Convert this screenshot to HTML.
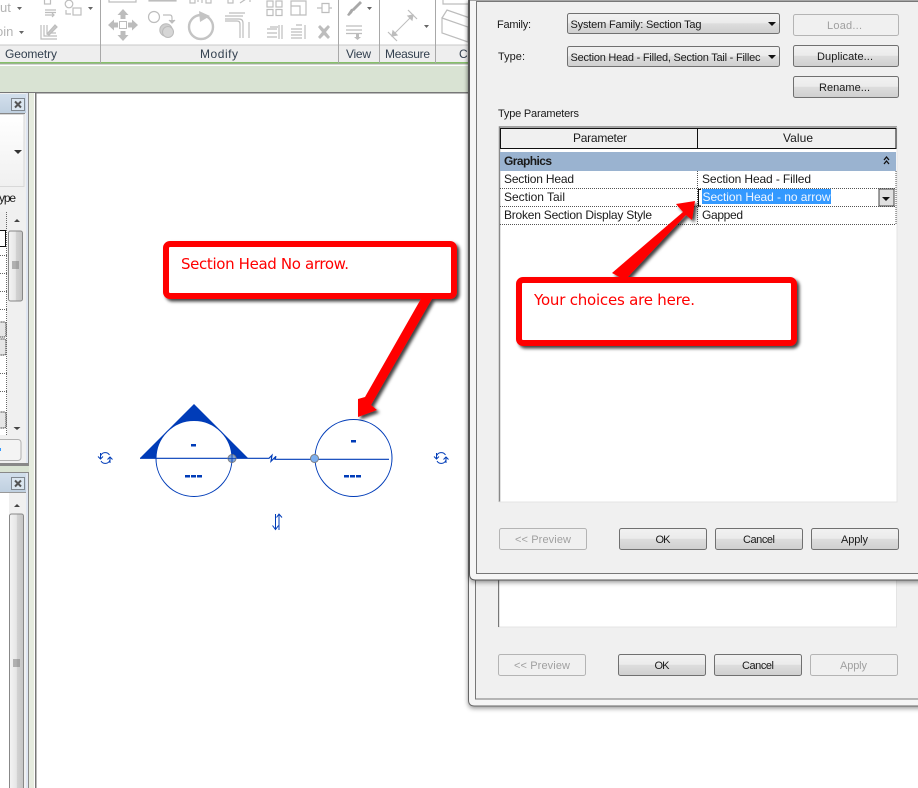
<!DOCTYPE html>
<html><head><meta charset="utf-8"><style>
html,body{margin:0;padding:0;background:#fff;overflow:hidden}
svg{display:block;position:absolute;left:0;top:0}
text{font-family:"Liberation Sans",sans-serif;font-size:12px;fill:#1a1a1a}
.s{font-size:11px}
.d{fill:#a0a0a0;font-size:11px}
.c{font-family:"DejaVu Sans",sans-serif;font-size:15px;fill:#f00}
.l{font-size:12px;fill:#33404f}
.g{fill:#b4b4b4;font-size:13px}
</style></head><body>
<svg width="918" height="788" viewBox="0 0 918 788" xmlns="http://www.w3.org/2000/svg">
<defs>
<linearGradient id="b" x1="0" y1="0" x2="0" y2="1"><stop offset="0" stop-color="#f2f2f2"/><stop offset=".48" stop-color="#ebebeb"/><stop offset=".5" stop-color="#dddddd"/><stop offset="1" stop-color="#cfcfcf"/></linearGradient>
<linearGradient id="h" x1="0" y1="0" x2="0" y2="1"><stop offset="0" stop-color="#d2dfec"/><stop offset="1" stop-color="#c0d0e0"/></linearGradient>
<linearGradient id="sb" x1="0" y1="0" x2="1" y2="0"><stop offset="0" stop-color="#f4f4f4"/><stop offset=".5" stop-color="#e6e6e6"/><stop offset=".55" stop-color="#d2d2d2"/><stop offset="1" stop-color="#c4c4c4"/></linearGradient>
<linearGradient id="pg" x1="0" y1="0" x2="0" y2="1"><stop offset="0" stop-color="#fff"/><stop offset="1" stop-color="#f0f0f0"/></linearGradient>
<filter id="sh" x="-10%" y="-10%" width="125%" height="125%"><feDropShadow dx="2.5" dy="2.5" stdDeviation="1.6" flood-color="#000" flood-opacity=".75"/></filter>
<filter id="ds" x="-5%" y="-5%" width="110%" height="110%"><feDropShadow dx="0" dy="2" stdDeviation="2.5" flood-color="#000" flood-opacity=".4"/></filter>
</defs>

<!-- ribbon -->
<rect width="918" height="788" fill="#fff"/>
<rect x="0" y="45" width="470" height="17" fill="#eeeeee"/>
<rect x="0" y="44.500" width="470" height="1" fill="#c8c8c8"/>
<rect x="0" y="62" width="470" height="1.500" fill="#86c06a"/>
<rect x="0" y="63.500" width="470" height="1" fill="#aaa"/>
<rect x="0" y="64.500" width="470" height="1.500" fill="#fff"/>
<rect x="0" y="66" width="470" height="26" fill="#d9e3d3"/>
<rect x="0" y="92" width="470" height="1.500" fill="#777"/>
<g fill="#a8a8a8"><rect x="100" y="0" width="1" height="63"/><rect x="338" y="0" width="1" height="63"/><rect x="379" y="0" width="1" height="63"/><rect x="435" y="0" width="1" height="63"/></g>
<text class="l" x="5" y="58" textLength="52">Geometry</text>
<text class="l" x="200" y="58" textLength="38">Modify</text>
<text class="l" x="346" y="58" textLength="25">View</text>
<text class="l" x="385" y="58" textLength="45">Measure</text>
<text class="l" x="459" y="58">Cr</text>
<text class="g" x="0" y="12">ut</text>
<text class="g" x="-4" y="36">oin</text>

<g fill="none" stroke="#bdbdbd" stroke-width="1.200">
<!-- cut -->
<rect x="44.500" y="-2" width="6" height="6"/><path d="M45 10h11M45 12.500h11M45 15h8M52 13l2 2-2 2"/>
<circle cx="69" cy="4" r="3.800"/><rect x="73" y="8" width="8" height="7"/><path d="M66 10v4h5"/>
<!-- join -->
<path d="M41 25v14h16M44 25v11h13M47 25v8h9"/><path d="M47 34l8-9 2 2-8 8z" fill="#c8c8c8"/>
<!-- top stubs -->
<path d="M109 -1v3h27v-3"/><rect x="149" y="-3" width="27" height="4" fill="#bdbdbd"/>
<rect x="190" y="-2" width="5" height="5"/><path d="M198 0v2M202 0v3"/><rect x="206" y="-2" width="5" height="5"/>
<rect x="228" y="-2" width="5" height="5"/><path d="M240 3l6-4h4v3"/>
<!-- copy -->
<circle cx="154" cy="17" r="5.500"/><path d="M163 15h7q2 0 2 3v3"/><path d="M169 20l3 3 3-3" fill="#bdbdbd"/>
<!-- grid -->
<rect x="267" y="1" width="6" height="6"/><rect x="276" y="1" width="6" height="6"/><rect x="267" y="9.500" width="6" height="6"/><rect x="276" y="9.500" width="6" height="6"/>
<path d="M291 15V1h15v14zM291 6h9v9"/>
<!-- pin -->
<path d="M317 8h5M329 8h3M322 3.500h7v9h-7z"/>
<!-- trim/offset -->
<path d="M225 19h14q4 0 4 4v15M225 16h18M225 21h12q3 0 3 3v14M249 38V22M229 13h16"/>
<path d="M267 29h10M267 33h10M267 37h10M279 25v14M282 25v14M270 27h8"/>
<path d="M291 29h11M291 32h11M291 35h11M291 38h11M302 25h-6M305 25v14"/>
<path d="M346 26h16M346 30h16M346 33.500h16" />
<!-- measure -->
<path d="M392 36l21-21" stroke-width="1"/><path d="M388 32l9 9M408 10l9 9"/>
<path d="M392 36l1-5 4 4zM413 15l-1 5-4-4z" fill="#bdbdbd"/>
<!-- create -->
<path d="M443 0v4h27M442 18l26 9v15l-26-9zM442 18l5-8 23 8M468 27l2-3"/>
</g>
<g fill="#bcbcbc">
<!-- move -->
<path d="M123 9l5.500 6h-3v4h-5v-4h-3zM123 41l5.500-6h-3v-4h-5v4h-3zM108 25l6-5.500v3h4v5h-4v3zM138 25l-6-5.500v3h-4v5h4v3z"/>
<!-- copy lower -->
<circle cx="166" cy="30" r="6.200" fill="#cfcfcf" stroke="#bbb"/><circle cx="168" cy="32" r="5.500" fill="#d6d6d6" stroke="#bbb"/>
<!-- brush -->
<path d="M347 15l4-6 4-1-3 5-3 3zM352 9l8-8 2 2-8 8-2-1z" fill="#a8a8a8"/>
<!-- x -->
<path d="M318 27l2-2 4 4 4-4 2 2-4 5 4 5-2 2-4-4-4 4-2-2 4-5z" fill="#bdbdbd"/>
<path d="M356 34h3v3h2l-3.500 3-3.500-3h2z"/>
</g>
<rect x="367" y="7" width="0" height="0"/>
<rect x="119.500" y="21.500" width="7" height="7" fill="#fff" stroke="#bcbcbc"/>
<circle cx="201" cy="27" r="12" fill="none" stroke="#c4c4c4" stroke-width="2.400"/>
<path d="M199 11l11 5-10 6z" fill="#c4c4c4"/>
<g fill="#666"><path d="M17 7h5l-2.500 3zM19 31h5l-2.500 3zM88 7h5l-2.500 3zM367 7h5l-2.500 3zM424 25h5l-2.500 3z"/></g>

<!-- left panels -->
<rect x="0" y="93" width="28" height="370" fill="#f0f0f0"/>
<rect x="0" y="94" width="28" height="19" fill="url(#h)"/>
<rect x="0" y="113" width="25" height="1" fill="#888"/>
<rect x="-2" y="114.500" width="26" height="72" fill="url(#pg)" stroke="#d8d8d8"/>
<rect x="11.500" y="98.500" width="13" height="12" fill="#dbe6f0" stroke="#808890"/>
<path d="M15 101.500l6 6M21 101.500l-6 6" stroke="#555" stroke-width="2"/>
<path d="M14 150h8l-4 4z" fill="#333"/>
<text x="-1" y="202" textLength="17">ype</text>
<rect x="0" y="212" width="7" height="223" fill="#fff"/>
<rect x="0" y="212" width="7" height="18" fill="#eee"/>
<rect x="-2" y="230.500" width="7.500" height="16" fill="#fff" stroke="#111" stroke-width="1"/>
<g stroke="#666" stroke-dasharray="1 1" fill="none"><path d="M0 255.500h7M0 273.500h7M0 291.500h7M0 309.500h7M0 373.500h7M0 391.500h7"/><path d="M6.500 212v223"/></g>
<rect x="-3" y="322" width="9" height="15" rx="2" fill="#e6e6e6" stroke="#666" stroke-dasharray="1.500 .6" stroke-width="1.300"/>
<rect x="-3" y="339" width="9" height="16" rx="2" fill="#e6e6e6" stroke="#666" stroke-dasharray="1.500 .6" stroke-width="1.300"/>
<rect x="-3" y="412" width="9" height="16" rx="2" fill="#e6e6e6" stroke="#666" stroke-dasharray="1.500 .6" stroke-width="1.300"/>
<path d="M14 222h6l-3-3zM13.500 427h7l-3.500 3z" fill="#444"/>
<rect x="8.500" y="231" width="14" height="70" rx="2" fill="url(#sb)" stroke="#888"/>
<path d="M12 262h7M12 264h7M12 266h7M12 268h7" stroke="#777"/>
<rect x="-3" y="439.500" width="24" height="21" rx="3" fill="#f4f4f4" stroke="#b0b0b0"/>
<rect x="0" y="448" width="1" height="3" fill="#39f"/>
<rect x="26" y="93" width="2" height="695" fill="#dfe6f2"/>
<rect x="28" y="93" width="1" height="695" fill="#8a8a8a"/>
<rect x="29" y="93" width="5" height="695" fill="#e6ecdf"/>
<rect x="34" y="93" width="1" height="695" fill="#fff"/>
<rect x="35" y="93" width="1.500" height="695" fill="#777"/>
<rect x="0" y="463" width="28" height="3" fill="#888"/>
<rect x="0" y="466" width="29" height="6" fill="#d9e3d3"/>
<rect x="0" y="472" width="28" height="1" fill="#888"/>
<rect x="0" y="473" width="26" height="315" fill="#f0f0f0"/>
<rect x="0" y="473" width="26" height="19" fill="url(#h)"/>
<rect x="0" y="492" width="26" height="1" fill="#999"/>
<rect x="0" y="493" width="9" height="295" fill="#fff"/>
<rect x="11.500" y="477.500" width="13" height="12" fill="#dbe6f0" stroke="#808890"/>
<path d="M15 480.500l6 6M21 480.500l-6 6" stroke="#555" stroke-width="2"/>
<path d="M14 507h6l-3-3z" fill="#444"/>
<rect x="9.500" y="514" width="14" height="290" rx="2" fill="url(#sb)" stroke="#888"/>
<path d="M13 660h7M13 662h7M13 664h7M13 666h7" stroke="#777"/>

<!-- drawing -->
<path d="M194 404L248 458H140Z" fill="#003cb8"/>
<circle cx="194" cy="458.500" r="38" fill="#fff" stroke="#003cb8" stroke-width="1"/>
<circle cx="353.500" cy="458" r="38.500" fill="#fff" stroke="#003cb8" stroke-width="1"/>
<path d="M140 458.300H269l3-3-1 6 5-5-1 3H389" fill="none" stroke="#003cb8" stroke-width="1.200"/>
<g fill="#003cb8"><rect x="191" y="444" width="5" height="2.500"/><rect x="185" y="475" width="5" height="2.500"/><rect x="191" y="475" width="5" height="2.500"/><rect x="197" y="475" width="5" height="2.500"/><rect x="351" y="440" width="5" height="2.500"/><rect x="344" y="475" width="5" height="2.500"/><rect x="350" y="475" width="5" height="2.500"/><rect x="356" y="475" width="5" height="2.500"/></g>
<circle cx="232" cy="458.500" r="4" fill="#7ba2d8" stroke="#808080" stroke-width="1"/>
<path d="M232 454v8.500M228 458.500h8" stroke="#003cb8" stroke-width=".8"/>
<circle cx="314.500" cy="458.500" r="4" fill="#7db0f0" stroke="#808080" stroke-width="1"/>
<g fill="none" stroke="#003cb8" stroke-width="1">
<path d="M100.500 456a5 5 0 0 1 9-1M110 460a5 5 0 0 1-9 1M100.500 453v6M98 456.500l2.500 2.500 2.500-2.500M110 463v-6M107.500 459.500l2.500-2.500 2.500 2.500"/>
<path d="M436.500 456a5 5 0 0 1 9-1M446 460a5 5 0 0 1-9 1M436.500 453v6M434 456.500l2.500 2.500 2.500-2.500M446 463v-6M443.500 459.500l2.500-2.500 2.500 2.500"/>
<path d="M275.500 514v15M272.500 525.500l3 4 3-4M279 530v-16M276.500 517.500l2.500-3.500 3 3.500"/>
</g>

<!-- back dialog -->
<path d="M468.500 0V700q0 6 6 6H930V0Z" fill="#f5f5f5" stroke="#666" filter="url(#ds)"/>
<rect x="475.500" y="500" width="450" height="199" fill="#f0f0f0" stroke="#777"/>
<rect x="498.500" y="575" width="398" height="52" fill="#fff" stroke="#e4e4e4"/>
<rect x="498" y="575" width="1.200" height="52" fill="#777"/>
<rect x="498.500" y="654.500" width="87" height="21" rx="2" fill="#f0f0f0" stroke="#b4b4b4"/>
<text class="d" x="514" y="669" textLength="56">&lt;&lt; Preview</text>
<rect x="618.500" y="654.500" width="87" height="21" rx="2" fill="url(#b)" stroke="#707070"/>
<text class="s" x="654.500" y="669" textLength="15">OK</text>
<rect x="714.500" y="654.500" width="87" height="21" rx="2" fill="url(#b)" stroke="#707070"/>
<text class="s" x="742" y="669" textLength="32">Cancel</text>
<rect x="810.500" y="654.500" width="87" height="21" rx="2" fill="#f0f0f0" stroke="#b4b4b4"/>
<text class="d" x="840" y="669" textLength="27">Apply</text>

<!-- front dialog -->
<path d="M469.500 0V574q0 6 6 6H930V0Z" fill="#f6f6f6" stroke="#555" filter="url(#ds)"/>
<rect x="476.500" y="1.500" width="450" height="572" fill="#f0f0f0" stroke="#777"/>

<text class="s" x="497" y="28" textLength="34">Family:</text>
<rect x="567.500" y="13.500" width="212" height="20" rx="2" fill="url(#b)" stroke="#707070"/>
<text class="s" x="570.500" y="28" textLength="131">System Family: Section Tag</text>
<path d="M768 22h8l-4 4z" fill="#111"/>
<text class="s" x="498" y="60" textLength="27">Type:</text>
<rect x="567.500" y="46.500" width="212" height="20" rx="2" fill="url(#b)" stroke="#707070"/>
<text class="s" x="570.500" y="61" textLength="190">Section Head - Filled, Section Tail - Fillec</text>
<path d="M768 55h8l-4 4z" fill="#111"/>

<rect x="793.500" y="14.500" width="105" height="21" rx="2" fill="#f0f0f0" stroke="#b4b4b4"/>
<text class="d" x="827" y="29" textLength="35">Load...</text>
<rect x="793.500" y="45.500" width="105" height="21" rx="2" fill="url(#b)" stroke="#707070"/>
<text class="s" x="817" y="60" textLength="56">Duplicate...</text>
<rect x="793.500" y="76.500" width="105" height="21" rx="2" fill="url(#b)" stroke="#707070"/>
<text class="s" x="819" y="91" textLength="51">Rename...</text>

<text class="s" x="498" y="117" textLength="81">Type Parameters</text>

<!-- table -->
<rect x="499" y="127" width="398" height="375" fill="#fff"/>
<path d="M499.500 502V127H897" fill="none" stroke="#888" stroke-width="1.500"/>
<path d="M897 127V502H499" fill="none" stroke="#e4e4e4"/>
<rect x="500.500" y="128.500" width="395.500" height="20" fill="#f0f0f0" stroke="#111"/>
<rect x="697" y="128" width="1" height="20" fill="#111"/>
<text x="573" y="142" textLength="54">Parameter</text>
<text x="783" y="142" textLength="30">Value</text>
<rect x="500" y="152" width="396" height="19" fill="#9ab3d0"/>
<text x="504" y="165" textLength="48" style="font-weight:bold">Graphics</text>
<path d="M884 160l2.500-3 2.500 3M884 164l2.500-3 2.500 3" fill="none" stroke="#111" stroke-width="1.300"/>
<g stroke="#555" stroke-dasharray="1 1" fill="none">
<path d="M500 188.500H896M500 206.500H896M500 224.500H896M697.500 171V225M896 171V225"/>
</g>
<text x="504" y="183" textLength="70">Section Head</text>
<text x="504" y="201" textLength="61">Section Tail</text>
<text x="504" y="219" textLength="148">Broken Section Display Style</text>
<text x="702" y="183" textLength="109">Section Head - Filled</text>
<rect x="702" y="189" width="129" height="15" fill="#3399ff"/>
<text x="702.500" y="201" textLength="128" style="fill:#f0f6ff">Section Head - no arrow</text>
<text x="702" y="219" textLength="41">Gapped</text>
<path d="M701 189.500h-2.500v16.500h2.500" fill="none" stroke="#111"/>
<rect x="879" y="189" width="15" height="17" fill="#e0e0e0" stroke="#444"/>
<path d="M882 197h8l-4 4z" fill="#111"/>

<rect x="499.500" y="528.500" width="87" height="21" rx="2" fill="#f0f0f0" stroke="#b4b4b4"/>
<text class="d" x="515" y="543" textLength="56">&lt;&lt; Preview</text>
<rect x="619.500" y="528.500" width="87" height="21" rx="2" fill="url(#b)" stroke="#707070"/>
<text class="s" x="655.500" y="543" textLength="15">OK</text>
<rect x="715.500" y="528.500" width="87" height="21" rx="2" fill="url(#b)" stroke="#707070"/>
<text class="s" x="743" y="543" textLength="32">Cancel</text>
<rect x="811.500" y="528.500" width="87" height="21" rx="2" fill="url(#b)" stroke="#707070"/>
<text class="s" x="841" y="543" textLength="27">Apply</text>

<!-- callouts -->
<g filter="url(#sh)">
<path d="M422 297L365 397 358 399 358 417 377 410 371 405 433 297Z" fill="#f00"/>
<rect x="166" y="244" width="288" height="52" rx="4" fill="#fff" stroke="#f00" stroke-width="6"/>
</g>
<text class="c" x="181" y="269" textLength="168">Section Head No arrow.</text>
<g filter="url(#sh)">
<path d="M612 273L683 212 676 204 695 201 692 220 686 215 625 280Z" fill="#f00"/>
<rect x="519" y="280" width="275" height="63" rx="4" fill="#fff" stroke="#f00" stroke-width="6"/>
</g>
<text class="c" x="534" y="305" textLength="161">Your choices are here.</text>
</svg>
</body></html>
